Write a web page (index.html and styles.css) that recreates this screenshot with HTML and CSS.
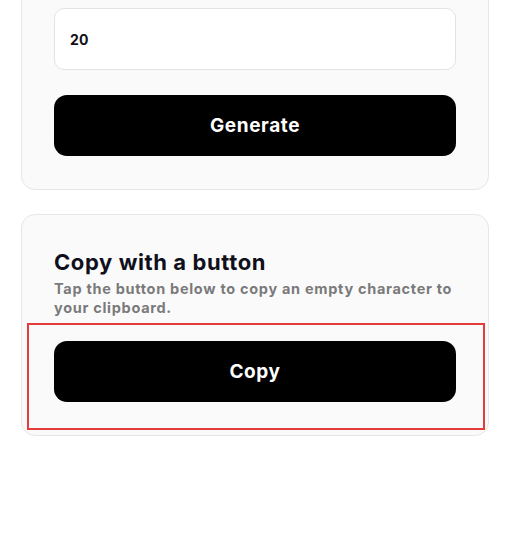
FILE: index.html
```html
<!DOCTYPE html>
<html>
<head>
<meta charset="utf-8">
<link rel="stylesheet" href="styles.css">
</head>
<body>
<main class="page">
  <section class="card card-top">
    <div class="field">20</div>
    <button class="btn">Generate</button>
  </section>
  <section class="card card-copy">
    <h2 class="title">Copy with a button</h2>
    <p class="desc">Tap the button below to copy an empty character to your clipboard.</p>
    <button class="btn btn-copy">Copy</button>
    <div class="highlight"></div>
  </section>
</main>
</body>
</html>
```
FILE: styles.css
```css
* { box-sizing: border-box; }
html, body { margin: 0; padding: 0; background: #ffffff; }
body { font-family: Inter, "Open Sans", sans-serif; color: #111118; }
.page {
  display: flex;
  flex-direction: column;
  gap: 24px;
  padding: 0 21px;
  margin-top: -25px;
}
.card {
  position: relative;
  background: #fafafa;
  border: 1px solid #e6e6e6;
  border-radius: 14px;
  padding: 32px 32px 33px;
  display: flex;
  flex-direction: column;
}
.field {
  height: 62px;
  background: #fff;
  border: 1px solid #e3e3e3;
  border-radius: 10px;
  display: flex;
  align-items: center;
  padding-left: 15px;
  font-weight: 700;
  font-size: 14px;
  letter-spacing: 0.3px;
  margin-bottom: 25px;
}
.btn {
  height: 61px;
  border: 0;
  border-radius: 13px;
  background: #000;
  color: #fff;
  font-family: inherit;
  font-weight: 700;
  font-size: 19px;
  letter-spacing: 0.6px;
  padding: 0;
}
.title {
  margin: 0;
  font-size: 22px;
  font-weight: 700;
  line-height: 30px;
  letter-spacing: 0.6px;
  color: #10101c;
}
.desc {
  margin: 2px 0 0;
  font-size: 14.5px;
  font-weight: 700;
  line-height: 19px;
  letter-spacing: 0.7px;
  color: #7a7a7a;
}
.btn-copy { margin-top: 24px; }
.highlight {
  position: absolute;
  left: 5px;
  top: 108px;
  width: 458px;
  height: 107px;
  border: 2.5px solid #e53b3b;
  pointer-events: none;
}
```
